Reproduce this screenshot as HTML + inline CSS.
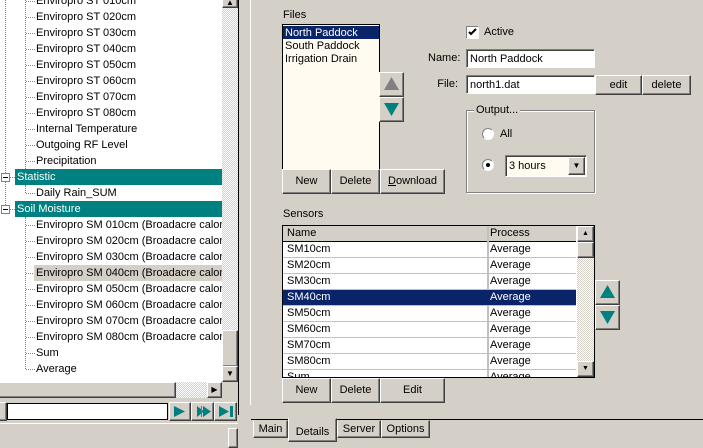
<!DOCTYPE html>
<html><head><style>
*{box-sizing:border-box;margin:0;padding:0}
body{width:703px;height:444px;background:#d4d0c8;font:11px "Liberation Sans",sans-serif;color:#000;position:relative;overflow:hidden}
.a{position:absolute}
.btn{position:absolute;background:#d4d0c8;border:1px solid;border-color:#fff #404040 #404040 #fff;box-shadow:inset -1px -1px 0 #808080;text-align:center;font-size:11px}
.sunk{position:absolute;border:1px solid;border-color:#808080 #fff #fff #808080;box-shadow:inset 1px 1px 0 #404040}
.pat{background:repeating-conic-gradient(#d4d0c8 0 25%,#fff 0 50%) 0 0/2px 2px}
.row{position:absolute;left:0;height:16px;line-height:17px;white-space:nowrap}
.dot{position:absolute;border-top:1px dotted #808080;width:9px}
</style></head><body>
<!-- tree -->
<div class="a" style="left:0;top:0;width:222px;height:382px;background:#fff;overflow:hidden">
<div class="a" style="left:25px;top:0;height:169px;border-left:1px dotted #808080"></div>
<div class="a" style="left:5px;top:0;height:209px;border-left:1px dotted #808080"></div>
<div class="a" style="left:25px;top:185px;height:8px;border-left:1px dotted #808080"></div>
<div class="a" style="left:25px;top:217px;height:152px;border-left:1px dotted #808080"></div>
<div id="t"></div>
</div>
<script>
var items=[["Enviropro ST 010cm",1],["Enviropro ST 020cm",1],["Enviropro ST 030cm",1],["Enviropro ST 040cm",1],["Enviropro ST 050cm",1],["Enviropro ST 060cm",1],["Enviropro ST 070cm",1],["Enviropro ST 080cm",1],["Internal Temperature",1],["Outgoing RF Level",1],["Precipitation",1],["Statistic",0],["Daily Rain_SUM",1],["Soil Moisture",0]];
for(var i=1;i<=8;i++)items.push(["Enviropro SM 0"+i+"0cm (Broadacre calonade",1]);
items.push(["Sum",1],["Average",1]);
var h="";
items.forEach(function(it,k){var y=-7+k*16;
if(it[1]){var sel=(it[0].indexOf("SM 040")>0);
h+='<div class="dot" style="left:26px;top:'+(y+8)+'px"></div><div class="row" style="left:34px;top:'+y+'px;padding-left:2px;'+(sel?'background:#d4d0c8;width:200px':'')+'">'+it[0]+'</div>';}
else{h+='<div class="a" style="left:1px;top:'+(y+4)+'px;width:9px;height:9px;border:1px solid #808080;background:#fff"><div class="a" style="left:1px;top:3px;width:5px;height:1px;background:#000"></div></div><div class="dot" style="left:10px;top:'+(y+8)+'px;width:5px"></div><div class="row" style="left:15px;top:'+y+'px;width:207px;background:#008080;color:#fff;padding-left:2px">'+it[0]+'</div>';}
});
document.getElementById("t").outerHTML=h;
</script>
<!-- vertical scrollbar -->
<div class="a pat" style="left:222px;top:0;width:16px;height:382px"></div>
<div class="btn" style="left:222px;top:-8px;width:16px;height:16px;font-size:8px;line-height:20px">▲</div>
<div class="btn" style="left:222px;top:330px;width:16px;height:37px"></div>
<div class="btn" style="left:222px;top:366px;width:16px;height:16px;font-size:8px;line-height:14px">▼</div>
<div class="a" style="left:238px;top:0;width:1px;height:415px;background:#000"></div>
<div class="a" style="left:250px;top:0;width:1px;height:405px;background:#fff"></div>
<!-- horizontal scrollbar -->
<div class="a pat" style="left:0;top:382px;width:222px;height:16px"></div>
<div class="btn" style="left:-2px;top:382px;width:178px;height:16px"></div>
<div class="btn" style="left:207px;top:382px;width:15px;height:16px;font-size:8px;line-height:14px">▶</div>
<!-- toolbar -->
<div class="btn" style="left:-10px;top:402px;width:17px;height:19px"></div>
<div class="a" style="left:7px;top:403px;width:161px;height:17px;background:#fff;border:1px solid #000"></div>
<div class="btn" style="left:169px;top:402px;width:22px;height:19px"><svg width="20" height="17" class="a" style="left:0;top:0"><path d="M4 3L15 8.5L4 14Z" fill="#008080"/></svg></div>
<div class="btn" style="left:191px;top:402px;width:23px;height:19px"><svg width="21" height="17" class="a" style="left:0;top:0"><path d="M5 3L12 8.5L5 14ZM11 3L19 8.5L11 14Z" fill="#008080"/><rect x="9" y="3" width="1" height="11" fill="#808000"/></svg></div>
<div class="btn" style="left:214px;top:402px;width:23px;height:19px"><svg width="21" height="17" class="a" style="left:0;top:0"><path d="M4 3L14 8.5L4 14Z" fill="#008080"/><rect x="15" y="3" width="3" height="11" fill="#008080"/></svg></div>
<div class="a" style="left:0;top:423px;width:238px;height:1px;background:#fff"></div>
<div class="btn" style="left:228px;top:428px;width:10px;height:20px"></div>

<!-- right panel -->
<div class="a" style="left:283px;top:9px">Files</div>
<div class="a" style="left:282px;top:24px;width:98px;height:146px;background:#fffbf0;border:1px solid #000;padding-top:1px">
<div style="background:#0a246a;color:#fff;height:13px;line-height:14px;padding-left:2px">North Paddock</div>
<div style="height:13px;line-height:14px;padding-left:2px">South Paddock</div>
<div style="height:13px;line-height:14px;padding-left:2px">Irrigation Drain</div>
</div>
<div class="btn" style="left:379px;top:72px;width:25px;height:25px"><svg width="23" height="23" class="a" style="left:0;top:0"><path d="M11.5 4L19 17H4Z" fill="#808080"/></svg></div>
<div class="btn" style="left:379px;top:97px;width:25px;height:25px"><svg width="23" height="23" class="a" style="left:0;top:0"><path d="M4 5H19L11.5 18Z" fill="#008080"/></svg></div>
<div class="btn" style="left:282px;top:169px;width:49px;height:25px;line-height:23px">New</div>
<div class="btn" style="left:331px;top:169px;width:49px;height:25px;line-height:23px">Delete</div>
<div class="btn" style="left:380px;top:169px;width:65px;height:25px;line-height:23px"><u>D</u>ownload</div>

<div class="a" style="left:466px;top:26px;width:13px;height:13px;background:#fff;border:1px solid;border-color:#808080 #fff #fff #808080"><svg width="11" height="11" class="a" style="left:0;top:0"><path d="M2 5L4 7L9 2" stroke="#000" stroke-width="2" fill="none"/></svg></div>
<div class="a" style="left:484px;top:26px">Active</div>
<div class="a" style="left:428px;top:52px;width:30px;text-align:right">Name:</div>
<div class="sunk" style="left:466px;top:49px;width:129px;height:19px;background:#fff;padding:3px 0 0 3px">North Paddock</div>
<div class="a" style="left:428px;top:78px;width:30px;text-align:right">File:</div>
<div class="sunk" style="left:466px;top:75px;width:129px;height:19px;background:#fff;padding:3px 0 0 3px">north1.dat</div>
<div class="btn" style="left:595px;top:75px;width:47px;height:20px;line-height:18px">edit</div>
<div class="btn" style="left:642px;top:75px;width:49px;height:20px;line-height:18px">delete</div>
<div class="a" style="left:466px;top:110px;width:129px;height:83px;border:1px solid #808080;box-shadow:1px 1px 0 #fff,inset 1px 1px 0 #fff"></div>
<div class="a" style="left:474px;top:104px;background:#d4d0c8;padding:0 2px">Output...</div>
<div class="a" style="left:482px;top:128px;width:12px;height:12px;border-radius:50%;background:#fff;border:1px solid;border-color:#808080 #fff #fff #808080"></div>
<div class="a" style="left:500px;top:128px">All</div>
<div class="a" style="left:482px;top:159px;width:12px;height:12px;border-radius:50%;background:#fff;border:1px solid;border-color:#808080 #fff #fff #808080"><div class="a" style="left:3px;top:3px;width:4px;height:4px;background:#000;border-radius:50%"></div></div>
<div class="sunk" style="left:505px;top:155px;width:82px;height:22px;background:#fffbf0;padding:4px 0 0 3px">3 hours</div>
<div class="btn" style="left:568px;top:157px;width:17px;height:18px;font-size:8px;line-height:16px">▼</div>

<div class="a" style="left:283px;top:208px">Sensors</div>
<div class="a" style="left:282px;top:225px;width:313px;height:153px;border:1px solid #000;background:#fff;overflow:hidden">
<div class="a" style="left:0;top:0;width:293px;height:16px;background:#d4d0c8;border-bottom:1px solid #000"></div>
<div class="a" style="left:4px;top:1px">Name</div>
<div class="a" style="left:207px;top:1px">Process</div>
<div class="a" style="left:204px;top:0;width:2px;height:153px;background:#c0c0c0"></div>
<div id="g"></div>
<div class="a pat" style="left:294px;top:0;width:17px;height:151px"></div>
<div class="btn" style="left:294px;top:0;width:17px;height:16px;font-size:7px;line-height:14px">▲</div>
<div class="btn" style="left:294px;top:16px;width:17px;height:16px"></div>
<div class="btn" style="left:294px;top:135px;width:17px;height:16px;font-size:7px;line-height:14px">▼</div>
</div>
<script>
var n=["SM10cm","SM20cm","SM30cm","SM40cm","SM50cm","SM60cm","SM70cm","SM80cm","Sum"],s="";
n.forEach(function(t,k){var y=16+k*16,sel=k==3;
s+='<div class="a" style="left:0;top:'+y+'px;width:293px;height:16px;border-bottom:1px solid #c0c0c0;'+(sel?'background:#0a246a;color:#fff':'')+'"><span class="a" style="left:4px;top:1px">'+t+'</span><span class="a" style="left:207px;top:1px">Average</span></div>';});
document.getElementById("g").outerHTML=s;
</script>
<div class="btn" style="left:595px;top:280px;width:25px;height:25px"><svg width="23" height="23" class="a" style="left:0;top:0"><path d="M11.5 4L19 17H4Z" fill="#008080"/></svg></div>
<div class="btn" style="left:595px;top:305px;width:25px;height:25px"><svg width="23" height="23" class="a" style="left:0;top:0"><path d="M4 5H19L11.5 18Z" fill="#008080"/></svg></div>
<div class="btn" style="left:282px;top:378px;width:49px;height:25px;line-height:23px">New</div>
<div class="btn" style="left:331px;top:378px;width:49px;height:25px;line-height:23px">Delete</div>
<div class="btn" style="left:380px;top:378px;width:65px;height:25px;line-height:23px">Edit</div>

<!-- tabs -->
<div class="a" style="left:251px;top:419px;width:452px;height:1px;background:#000"></div>
<div class="btn" style="left:253px;top:420px;width:35px;height:18px;line-height:16px;border-top-color:#d4d0c8">Main</div>
<div class="btn" style="left:288px;top:418px;width:49px;height:24px;line-height:26px;border-top-color:#d4d0c8">Details</div>
<div class="btn" style="left:337px;top:420px;width:44px;height:18px;line-height:16px;border-top-color:#d4d0c8">Server</div>
<div class="btn" style="left:381px;top:420px;width:49px;height:18px;line-height:16px;border-top-color:#d4d0c8">Options</div>
</body></html>
